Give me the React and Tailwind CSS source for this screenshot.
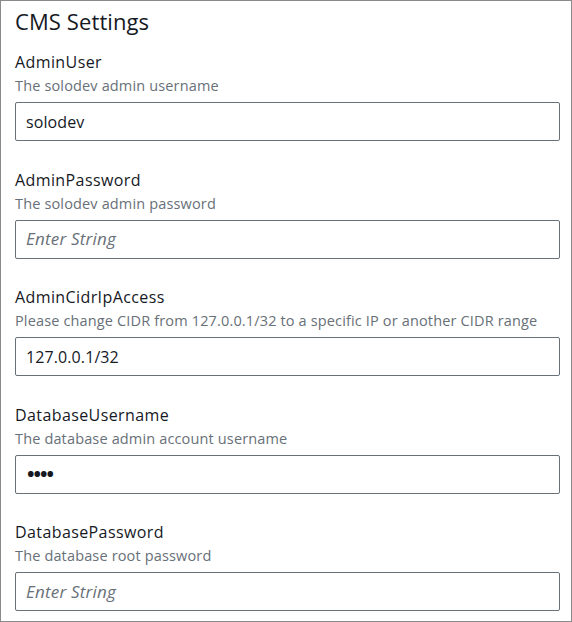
import React from "react";

const fields = [
  { label: "AdminUser", desc: "The solodev admin username", value: "solodev" },
  { label: "AdminPassword", desc: "The solodev admin password", placeholder: "Enter String" },
  { label: "AdminCidrIpAccess", desc: "Please change CIDR from 127.0.0.1/32 to a specific IP or another CIDR range", value: "127.0.0.1/32" },
  { label: "DatabaseUsername", desc: "The database admin account username", dots: true },
  { label: "DatabasePassword", desc: "The database root password", placeholder: "Enter String" },
];

export default function App() {
  return (
    <div
      className="w-[572px] h-[622px] bg-white border border-[#8a8a8a] pl-[14px] pr-[11px] pt-[6px] overflow-hidden"
      style={{ fontFamily: '"Open Sans", "Noto Sans", sans-serif' }}
    >
      <h1 className="text-[22px] leading-[28px] text-[#16191f] tracking-[0.1px]">CMS Settings</h1>
      <div className="flex flex-col gap-[27.5px] mt-[16px]">
        {fields.map((f) => (
          <div key={f.label} className="flex flex-col">
            <div className="text-[16px] leading-[22px] text-[#16191f] tracking-[0.4px]">{f.label}</div>
            <div className="text-[14.5px] leading-[20px] text-[#687078] mt-[3px] tracking-[0.15px]">{f.desc}</div>
            <div className="mt-[6px] h-[39px] border border-[#687078] rounded-[2px] flex items-center px-[10px]">
              {f.value && <span className="text-[16px] text-[#16191f] tracking-[0.1px]">{f.value}</span>}
              {f.placeholder && <span className="text-[17px] italic text-[#687078] tracking-[0.2px]">{f.placeholder}</span>}
              {f.dots && <span className="text-[20px] leading-[20px] font-bold text-[#16191f] tracking-[-1px] pl-[1px]">••••</span>}
            </div>
          </div>
        ))}
      </div>
    </div>
  );
}
